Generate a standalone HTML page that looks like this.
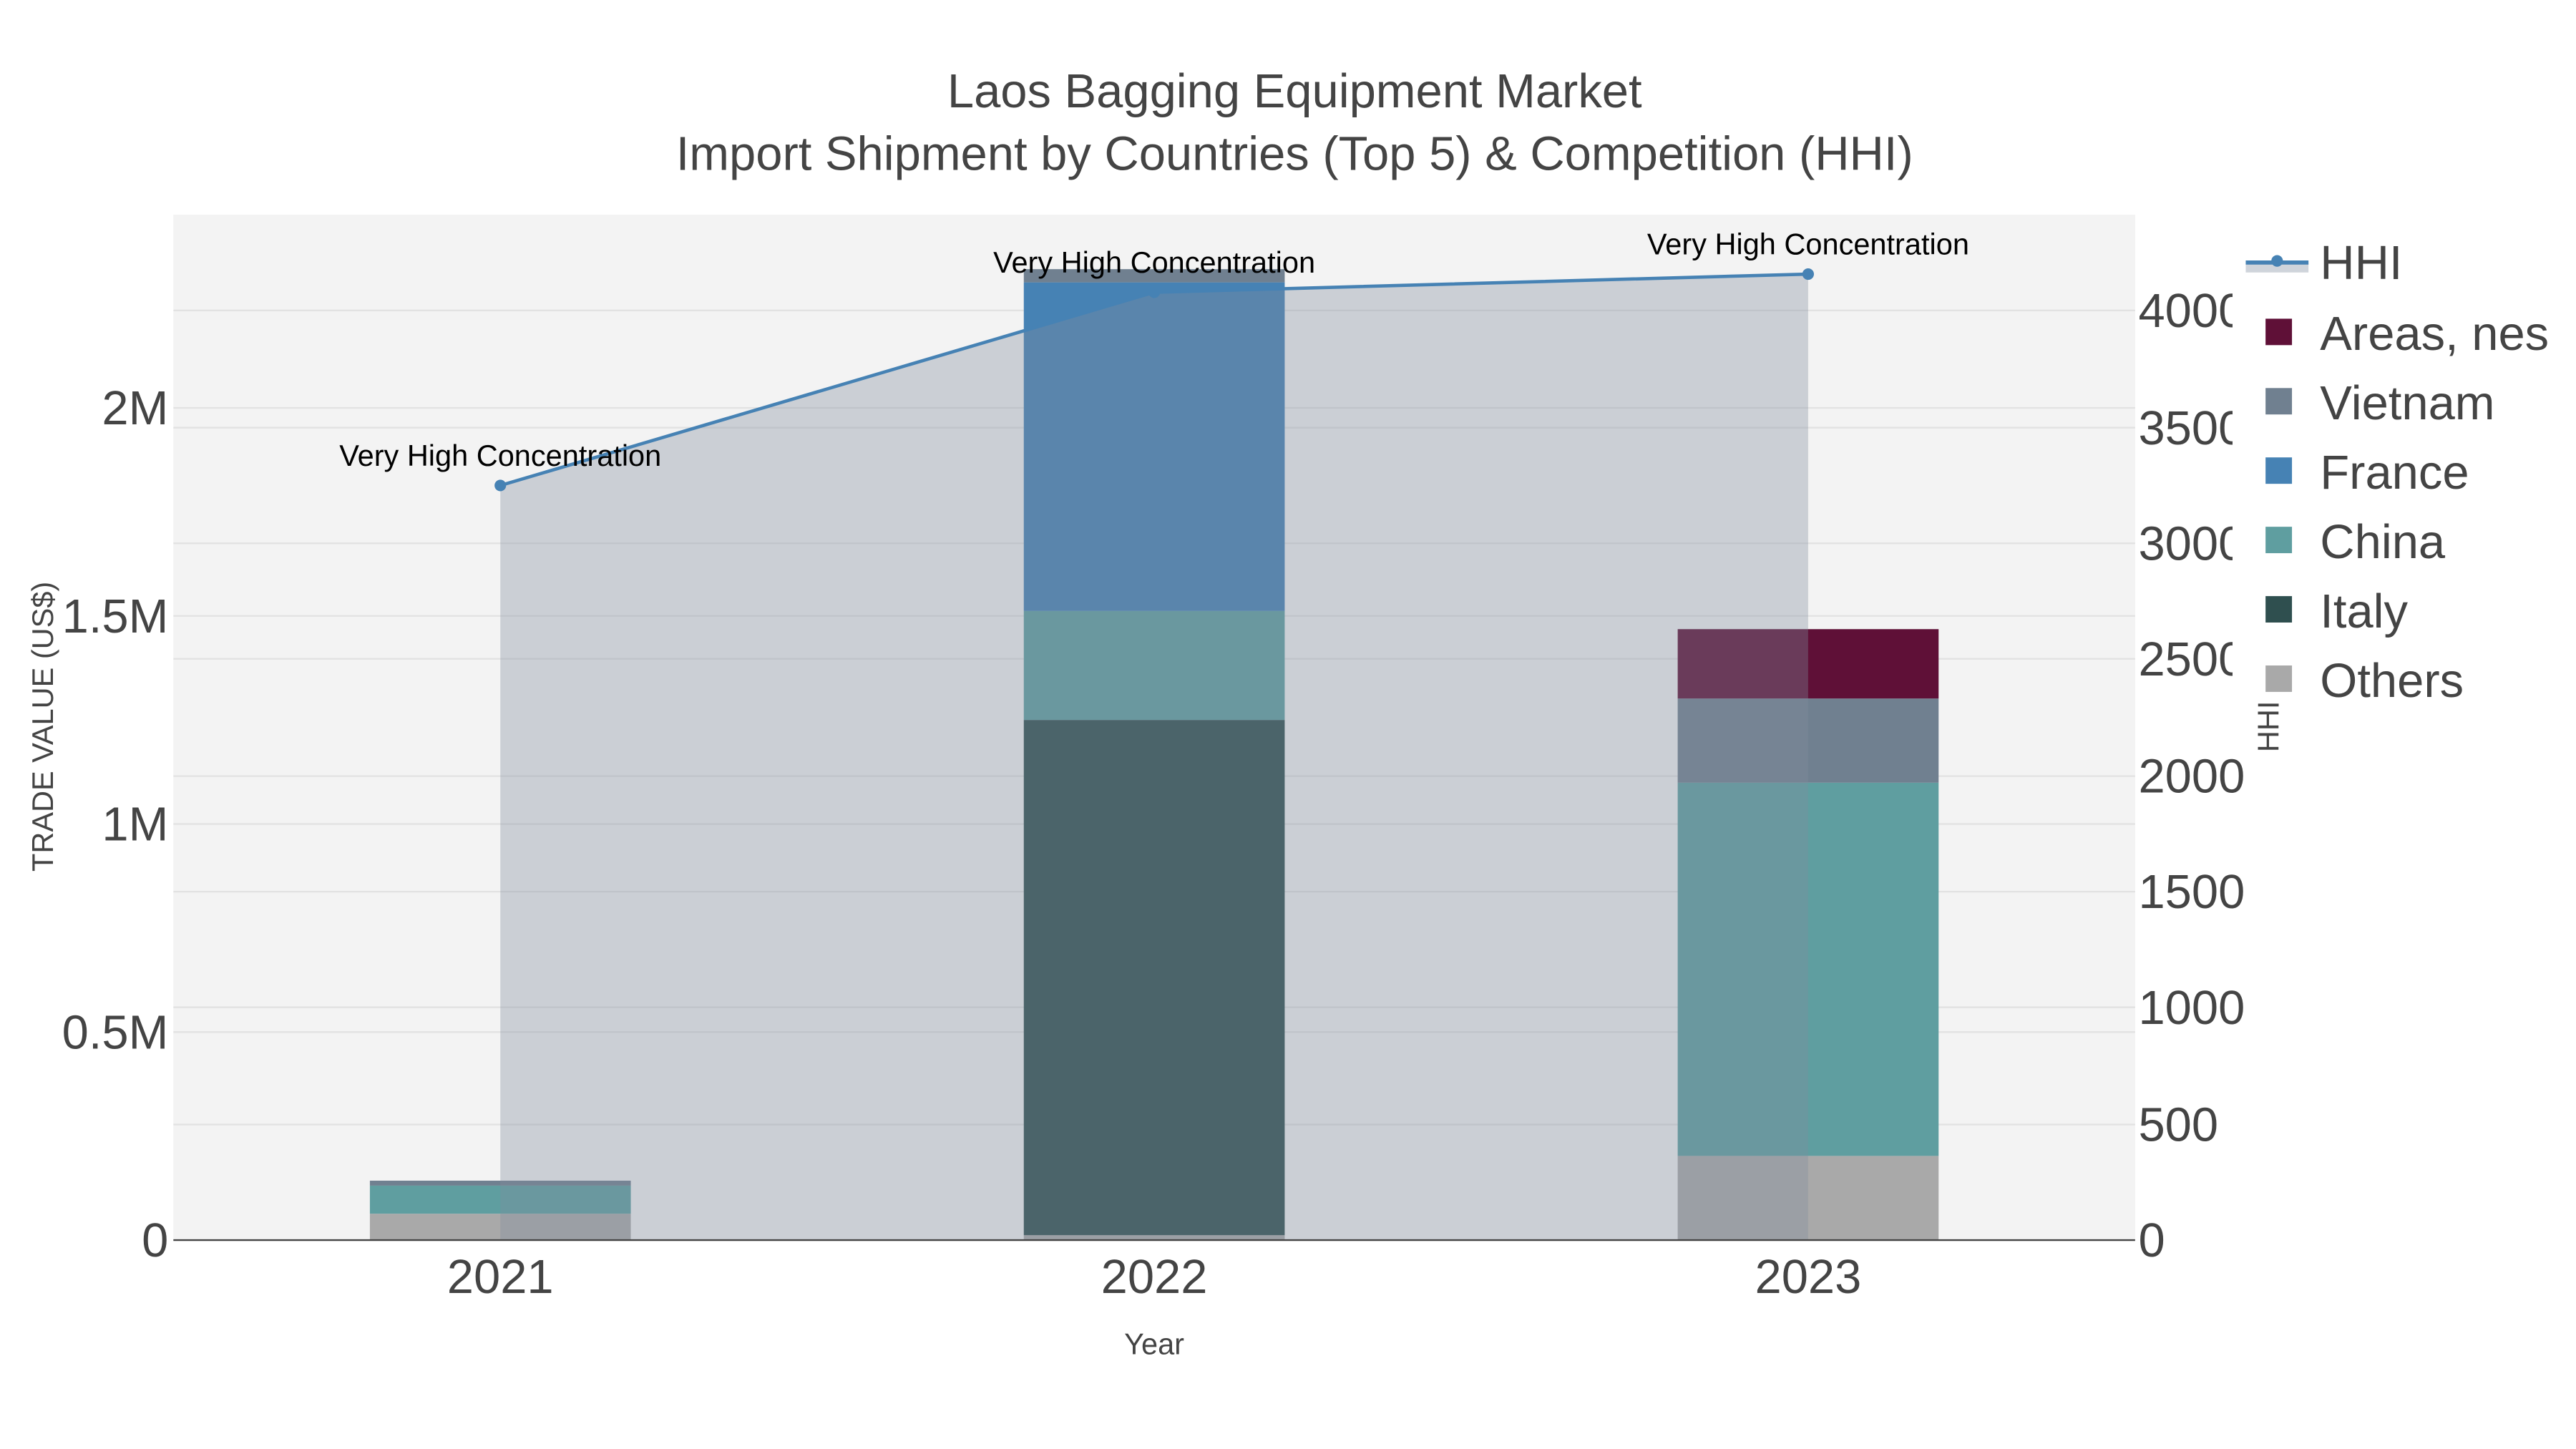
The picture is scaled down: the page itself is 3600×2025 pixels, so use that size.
<!DOCTYPE html>
<html><head><meta charset="utf-8"><style>
html,body{margin:0;padding:0;background:#fff;}
svg{display:block;}
text{font-family:"Liberation Sans",Arial,sans-serif;}
</style></head><body>
<svg width="3600" height="2025" viewBox="0 0 1560 877.5" xmlns="http://www.w3.org/2000/svg">
<rect width="1560" height="877.5" fill="#fff"/>
<rect x="105" y="130" width="1188" height="621" fill="#f3f3f3"/>
<g stroke="#e2e2e2" stroke-width="1">
<line x1="105" x2="1293" y1="625" y2="625"/><line x1="105" x2="1293" y1="499" y2="499"/>
<line x1="105" x2="1293" y1="373" y2="373"/><line x1="105" x2="1293" y1="247" y2="247"/>
<line x1="105" x2="1293" y1="681" y2="681"/><line x1="105" x2="1293" y1="610" y2="610"/>
<line x1="105" x2="1293" y1="540" y2="540"/><line x1="105" x2="1293" y1="470" y2="470"/>
<line x1="105" x2="1293" y1="399" y2="399"/><line x1="105" x2="1293" y1="329" y2="329"/>
<line x1="105" x2="1293" y1="259" y2="259"/><line x1="105" x2="1293" y1="188" y2="188"/>
</g>
<rect x="224" y="735" width="158" height="16" fill="#a9a9a9"/>
<rect x="224" y="718" width="158" height="17" fill="#5f9ea0"/>
<rect x="224" y="715" width="158" height="3" fill="#708090"/>
<rect x="620" y="748" width="158" height="3" fill="#a9a9a9"/>
<rect x="620" y="436" width="158" height="312" fill="#2f4f4f"/>
<rect x="620" y="370" width="158" height="66" fill="#5f9ea0"/>
<rect x="620" y="171" width="158" height="199" fill="#4682b4"/>
<rect x="620" y="163" width="158" height="8" fill="#708090"/>
<rect x="1016" y="700" width="158" height="51" fill="#a9a9a9"/>
<rect x="1016" y="474" width="158" height="226" fill="#5f9ea0"/>
<rect x="1016" y="423" width="158" height="51" fill="#708090"/>
<rect x="1016" y="381" width="158" height="42" fill="#5f1037"/>
<polygon points="303,294 699,177 1095,166 1095,751 303,751" fill="rgb(130,140,158)" fill-opacity="0.35"/>
<line x1="105" x2="1293" y1="751" y2="751" stroke="#444" stroke-width="1"/>
<polyline points="303,294 699,177 1095,166" fill="none" stroke="#4682b4" stroke-width="2"/>
<circle cx="303" cy="294" r="3.5" fill="#4682b4"/><circle cx="699" cy="177" r="3.5" fill="#4682b4"/><circle cx="1095" cy="166" r="3.5" fill="#4682b4"/>
<g font-size="18" fill="#000" text-anchor="middle">
<text x="303" y="282">Very High Concentration</text>
<text x="699" y="165">Very High Concentration</text>
<text x="1095" y="154">Very High Concentration</text>
</g>
<g font-size="29" fill="#444" text-anchor="middle">
<text x="784" y="65">Laos Bagging Equipment Market</text>
<text x="784" y="103">Import Shipment by Countries (Top 5) &amp; Competition (HHI)</text>
</g>
<g font-size="29" fill="#444" text-anchor="end">
<text x="102" y="761">0</text><text x="102" y="635">0.5M</text><text x="102" y="509">1M</text>
<text x="102" y="383">1.5M</text><text x="102" y="257">2M</text>
</g>
<g font-size="29" fill="#444">
<text x="1295" y="761">0</text><text x="1295" y="691">500</text><text x="1295" y="620">1000</text>
<text x="1295" y="550">1500</text><text x="1295" y="480">2000</text><text x="1295" y="409">2500</text>
<text x="1295" y="339">3000</text><text x="1295" y="269">3500</text><text x="1295" y="198">4000</text>
</g>
<g font-size="29" fill="#444" text-anchor="middle">
<text x="303" y="783">2021</text><text x="699" y="783">2022</text><text x="1095" y="783">2023</text>
</g>
<text x="699" y="820" font-size="18" fill="#444" text-anchor="middle">Year</text>
<text transform="translate(32,440) rotate(-90)" font-size="18" fill="#444" text-anchor="middle">TRADE VALUE (US$)</text>
<rect x="1352" y="135" width="208" height="295" fill="#fff"/>
<text transform="translate(1380,440) rotate(-90)" font-size="18" fill="#444" text-anchor="middle">HHI</text>
<rect x="1360" y="159" width="38" height="6" fill="#cfd4db"/>
<line x1="1360" x2="1398" y1="159" y2="159" stroke="#4682b4" stroke-width="2.5"/>
<circle cx="1379" cy="158" r="3.5" fill="#4682b4"/>
<rect x="1372" y="193" width="16" height="16" fill="#5f1037"/>
<rect x="1372" y="235" width="16" height="16" fill="#708090"/>
<rect x="1372" y="277" width="16" height="16" fill="#4682b4"/>
<rect x="1372" y="319" width="16" height="16" fill="#5f9ea0"/>
<rect x="1372" y="361" width="16" height="16" fill="#2f4f4f"/>
<rect x="1372" y="403" width="16" height="16" fill="#a9a9a9"/>
<g font-size="29" fill="#444">
<text x="1405" y="169">HHI</text><text x="1405" y="212">Areas, nes</text><text x="1405" y="254">Vietnam</text>
<text x="1405" y="296">France</text><text x="1405" y="338">China</text><text x="1405" y="380">Italy</text>
<text x="1405" y="422">Others</text>
</g>
</svg>
</body></html>
